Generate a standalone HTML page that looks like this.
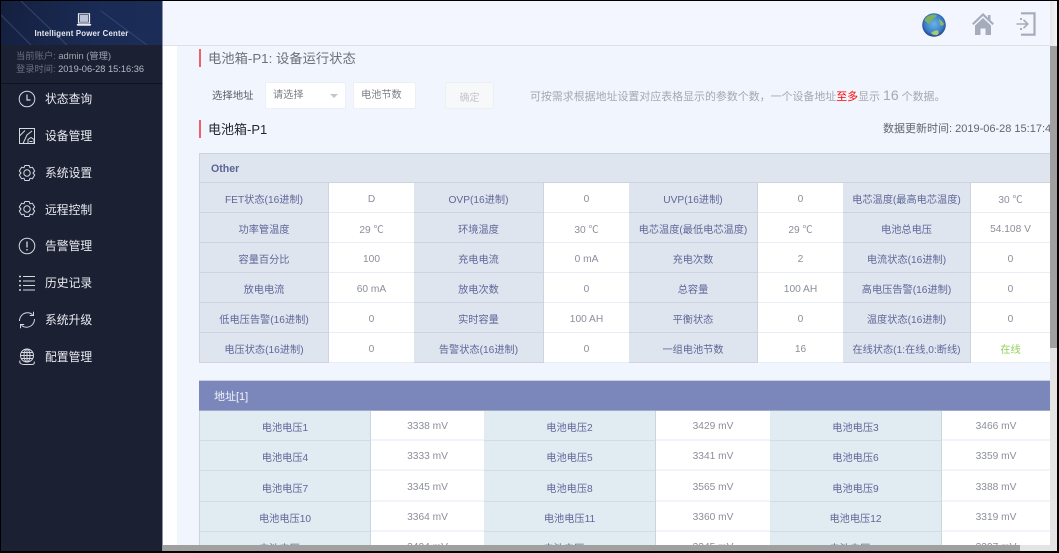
<!DOCTYPE html>
<html lang="zh"><head><meta charset="utf-8"><title>电池箱-P1</title>
<style>
*{box-sizing:border-box}
html,body{margin:0;padding:0;width:1059px;height:553px;overflow:hidden;background:#000}
body{position:relative;font-family:"Liberation Sans","Noto Sans CJK SC",sans-serif;font-size:10.2px}
.a{position:absolute;white-space:nowrap}
#side{left:1px;top:1px;width:161px;height:550px;background:#1c2033}
#brand{left:1px;top:1px;width:161px;height:44px;background:linear-gradient(100deg,#15203f,#1a2b55 60%,#1b2c58);overflow:hidden}
#edge{left:162px;top:1px;width:1px;height:550px;background:#8d93a3}
#head{left:163px;top:1px;width:887px;height:45px;background:#f3f6fe;border-bottom:1px solid #dde1ea}
#left{left:163px;top:46px;width:14px;height:499px;background:#fff}
#main{left:177px;top:46px;width:873px;height:499px;background:#f1f5fd}
.m{left:45px;color:#e9ebf0;font-size:11.8px;line-height:16px}
.ic{left:18px;width:18px;height:18px}
.red{left:199px;width:2px;height:18px;background:#f0606c}
.box{background:#fff;border:1px solid #eceff5;border-radius:2px;top:82px;height:27px;line-height:25px;color:#7c7f88;font-size:10.2px}
table{border-collapse:separate;border-spacing:0;table-layout:fixed;position:absolute;left:0;top:0}
td{padding:3px 0 0;text-align:center;white-space:nowrap;overflow:hidden;font-size:10.2px}
td.l,td.c{padding-top:1px}
#t1wrap{left:199px;top:153px;width:851px;height:211px;overflow:hidden}
#t1 td{height:30px;background:#fff;color:#8b8f9a;border-bottom:1px solid #e9edf5}
#t1 td.l{background:#dfe5ef;color:#5f6798;border-right:1px solid #cdd3e0;border-bottom:1px solid #cdd3e0;padding-top:2px}
#t1 td.l.f{border-left:1px solid #cdd3e0}
#t1 td.h{background:#dfe5ef;color:#5a6397;font-weight:bold;font-size:10.6px;text-align:left;padding-left:11px;padding-top:2px;border:1px solid #cdd3e0;border-right:0}
#t2wrap{left:199px;top:380px;width:851px;height:165px;overflow:hidden}
#t2 td{background:#fff;color:#8b8f9a;border-bottom:2px solid #f1f5fb}
#t2 td.l{background:#e1ebf2;color:#5f6798;border-right:1px solid #cbd5e0;border-bottom:1px solid #d3dce6;padding-top:2px}
#t2 td.l.f{border-left:1px solid #cbd5e0}
#t2 td.h{background:#7b87ba;color:#f2f4fa;text-align:left;padding-left:15px;padding-top:0;font-size:11px;border:0;border-top:1px solid #c9cfe0;border-bottom:1px solid #9fabc9}
</style></head><body>
<div class="a" id="side"></div>
<div class="a" id="brand">
<svg width="161" height="44" style="position:absolute;left:0;top:0"><g stroke="#3a4c78" stroke-width="1" fill="none" opacity=".8"><path d="M20 0L66 44"/><path d="M100 10L146 44"/><path d="M0 14L30 44"/></g></svg>
<svg width="16" height="14" viewBox="0 0 16 14" style="position:absolute;left:75px;top:12px"><path d="M2.5 .8H13.5V10H2.5Z" fill="#0f1a35" stroke="#e8ebf2" stroke-width="1.2"/><path d="M3.7 2H12.3V8.9H3.7Z" fill="#b9c2d6"/><path d="M.6 11H15.4L14.6 12.8H1.4Z" fill="#e8ebf2"/></svg>
<div class="a" style="left:0;width:161px;text-align:center;top:28px;color:#e6e9f0;font-size:7.8px;font-weight:bold;line-height:10px;letter-spacing:.2px">Intelligent Power Center</div>
</div>
<div class="a" style="left:1px;top:83px;width:161px;height:1px;background:#0e1120"></div>
<div class="a" style="left:16px;top:50px;font-size:9.3px;line-height:12px;color:#6b7080">当前账户: <span style="color:#a2a6b2">admin (管理)</span></div>
<div class="a" style="left:16px;top:63px;font-size:9.25px;line-height:12px;color:#6b7080">登录时间: <span style="color:#b6bac4">2019-06-28 15:16:36</span></div>

<svg class="a ic" style="top:90px" viewBox="0 0 18 18" fill="none" stroke="#d5d8e0" stroke-width="1"><circle cx="9" cy="9" r="7.8"/><path d="M9 4.5V10H12.5" stroke-width="1.2"/></svg>
<div class="a m" style="top:91px">状态查询</div>
<svg class="a ic" style="top:127px" viewBox="0 0 18 18" fill="none" stroke="#d5d8e0" stroke-width="1"><rect x="1.5" y="1.5" width="15" height="15"/><path d="M1.5 9L7 3.5M5 16.5L9 8L14 4M10 16.5V12.5L13 10.5L16 12.5V16.5M11.5 14.5H14.5"/></svg>
<div class="a m" style="top:128px">设备管理</div>
<svg class="a ic" style="top:164px" viewBox="0 0 18 18" fill="none" stroke="#d5d8e0" stroke-width="1"><path d="M6.8 1.5H11.2L12 3.8L14.4 3.2L16.7 7L15 9L16.7 11L14.4 14.8L12 14.2L11.2 16.5H6.8L6 14.2L3.6 14.8L1.3 11L3 9L1.3 7L3.6 3.2L6 3.8Z" stroke-linejoin="round"/><circle cx="9" cy="9" r="3.2"/></svg>
<div class="a m" style="top:165px">系统设置</div>
<svg class="a ic" style="top:200px" viewBox="0 0 18 18" fill="none" stroke="#d5d8e0" stroke-width="1"><path d="M6.8 1.5H11.2L12 3.8L14.4 3.2L16.7 7L15 9L16.7 11L14.4 14.8L12 14.2L11.2 16.5H6.8L6 14.2L3.6 14.8L1.3 11L3 9L1.3 7L3.6 3.2L6 3.8Z" stroke-linejoin="round"/><circle cx="9" cy="9" r="3.2"/></svg>
<div class="a m" style="top:202px">远程控制</div>
<svg class="a ic" style="top:237px" viewBox="0 0 18 18" fill="none" stroke="#d5d8e0" stroke-width="1"><circle cx="9" cy="9" r="7.8"/><path d="M9 4.5V10.5M9 12V13.5" stroke-width="1.3"/></svg>
<div class="a m" style="top:238px">告警管理</div>
<svg class="a ic" style="top:274px" viewBox="0 0 18 18" fill="none" stroke="#d5d8e0" stroke-width="1"><path d="M5 2.5H17M5 7H17M5 11.500H17M5 16H17"/><path d="M1 2.500H3M1 7H3M1 11.500H3M1 16H3" stroke-width="1.500"/></svg>
<div class="a m" style="top:275px">历史记录</div>
<svg class="a ic" style="top:311px" viewBox="0 0 18 18" fill="none" stroke="#d5d8e0" stroke-width="1"><path d="M1.500 10C1.500 5.500 5 1.800 9.500 1.800C11.500 1.800 13.300 2.500 14.500 3.800"/><path d="M16.500 8C16.500 12.500 13 16.200 8.500 16.200C6.500 16.200 4.700 15.500 3.500 14.200"/><path d="M15.500 .8V4.500H11.800M2.500 17.200V13.500H6.200"/></svg>
<div class="a m" style="top:312px">系统升级</div>
<svg class="a ic" style="top:348px" viewBox="0 0 18 18" fill="none" stroke="#d5d8e0" stroke-width="1"><circle cx="9" cy="7.500" r="6.500"/><ellipse cx="9" cy="7.500" rx="3" ry="6.500"/><path d="M2.500 7.500H15.500M9 1V14M3.500 4.500H14.500M3.500 10.500H14.500"/><path d="M2 12.500C1 15 3 16.500 6 16.500H14C16 16.500 17 15 16 13.500"/></svg>
<div class="a m" style="top:349px">配置管理</div>

<div class="a" id="edge"></div>
<div class="a" id="head"></div>
<div class="a" id="left"></div>
<div class="a" id="main"></div>

<svg class="a" style="left:922px;top:13px" width="24" height="24" viewBox="0 0 24 24"><defs><radialGradient id="g" cx=".5" cy=".45" r=".6"><stop offset="0" stop-color="#68b4ea"/><stop offset=".65" stop-color="#3a7fc4"/><stop offset="1" stop-color="#1f2c80"/></radialGradient></defs><circle cx="12" cy="12" r="11.800" fill="url(#g)"/><path d="M6 3C9 1.500 13 1 15 2.500C14 4.500 12 4.500 11 6C10 8 8 8.500 7.500 11C5 10 3 8 2.500 7C3 5.500 4.500 4 6 3Z" fill="#7fb060"/><path d="M17 6.500C19 7 21 9 22 11C21 13 19 13 18 12C18.500 10.500 17 9 17 6.500Z" fill="#8db96a"/><path d="M9 20C11 18 14 17 16 17.500C17 19 17 20.500 15.500 22C13 22.500 10.500 22 9 20Z" fill="#a8c878"/></svg>
<svg class="a" style="left:971px;top:12px" width="24" height="24" viewBox="0 0 24 24"><path d="M12 1L1 11.500L2.500 13L12 4L21.500 13L23 11.500L19.500 8.200V3H17V5.800Z" fill="#a7acba"/><path d="M4 13.500L12 6L20 13.500V23H14.500V16.500H9.500V23H4Z" fill="#a7acba"/></svg>
<svg class="a" style="left:1016px;top:12px" width="20" height="24" viewBox="0 0 20 24" fill="none" stroke="#a7acba"><path d="M5 1.300H18.500V22.700H5" stroke-width="2.200"/><path d="M5 6V8M5 16V18" stroke-width="2"/><path d="M.5 12H11M7.500 7.800L11.800 12L7.500 16.200" stroke-width="1.600"/></svg>

<div class="a red" style="top:49px"></div>
<div class="a" style="left:208px;top:50px;font-size:13.3px;line-height:18px;color:#6d7078">电池箱-P1: 设备运行状态</div>
<div class="a" style="left:212px;top:89px;font-size:10.400px;line-height:15px;color:#5e6068">选择地址</div>
<div class="a box" style="left:265px;width:81px;padding-left:7px">请选择</div>
<div class="a" style="left:330px;top:94px;width:0;height:0;border-left:4px solid transparent;border-right:4px solid transparent;border-top:4px solid #c4c6cc"></div>
<div class="a box" style="left:353px;width:63px;padding-left:7px">电池节数</div>
<div class="a box" style="left:445px;width:49px;text-align:center;background:#f7f8fa;color:#c4c6cc;font-size:10px;padding-top:3px">确定</div>
<div class="a" style="left:530px;top:86px;font-size:10.950px;line-height:18px;color:#a6a8ae">可按需求根据地址设置对应表格显示的参数个数，一个设备地址<span style="color:#f00">至多</span>显示 <span style="font-size:14px">16</span> 个数据。</div>
<div class="a red" style="top:120px"></div>
<div class="a" style="left:208px;top:121px;font-size:13px;line-height:18px;color:#26282e">电池箱-P1</div>
<div class="a" style="left:883px;top:122px;font-size:11px;line-height:15px;color:#63666c;width:167px;overflow:hidden">数据更新时间: 2019-06-28 15:17:46</div>

<div class="a" id="t1wrap"><table id="t1" style="width:851px">
<colgroup><col style="width:130px"><col style="width:85px"><col style="width:130px"><col style="width:85px"><col style="width:129px"><col style="width:85px"><col style="width:128px"><col style="width:79px"></colgroup>
<tr><td class="h" colspan="8">Other</td></tr>
<tr><td class="l f">FET状态(16进制)</td><td>D</td><td class="l">OVP(16进制)</td><td>0</td><td class="l">UVP(16进制)</td><td>0</td><td class="l">电芯温度(最高电芯温度)</td><td class="c">30 ℃</td></tr>
<tr><td class="l f">功率管温度</td><td class="c">29 ℃</td><td class="l">环境温度</td><td class="c">30 ℃</td><td class="l">电芯温度(最低电芯温度)</td><td class="c">29 ℃</td><td class="l">电池总电压</td><td>54.108 V</td></tr>
<tr><td class="l f">容量百分比</td><td>100</td><td class="l">充电电流</td><td>0 mA</td><td class="l">充电次数</td><td>2</td><td class="l">电流状态(16进制)</td><td>0</td></tr>
<tr><td class="l f">放电电流</td><td>60 mA</td><td class="l">放电次数</td><td>0</td><td class="l">总容量</td><td>100 AH</td><td class="l">高电压告警(16进制)</td><td>0</td></tr>
<tr><td class="l f">低电压告警(16进制)</td><td>0</td><td class="l">实时容量</td><td>100 AH</td><td class="l">平衡状态</td><td>0</td><td class="l">温度状态(16进制)</td><td>0</td></tr>
<tr><td class="l f">电压状态(16进制)</td><td>0</td><td class="l">告警状态(16进制)</td><td>0</td><td class="l">一组电池节数</td><td>16</td><td class="l">在线状态(1:在线,0:断线)</td><td class="c" style="color:#8fd05a">在线</td></tr>
</table></div>

<div class="a" id="t2wrap"><table id="t2" style="width:851px">
<colgroup><col style="width:172px"><col style="width:113px"><col style="width:172px"><col style="width:114px"><col style="width:172px"><col style="width:108px"></colgroup>
<tr style="height:31px"><td class="h" colspan="6">地址[1]</td></tr>
<tr style="height:30px"><td class="l f">电池电压1</td><td>3338 mV</td><td class="l">电池电压2</td><td>3429 mV</td><td class="l">电池电压3</td><td>3466 mV</td></tr>
<tr style="height:30px"><td class="l f">电池电压4</td><td>3333 mV</td><td class="l">电池电压5</td><td>3341 mV</td><td class="l">电池电压6</td><td>3359 mV</td></tr>
<tr style="height:31px"><td class="l f">电池电压7</td><td>3345 mV</td><td class="l">电池电压8</td><td>3565 mV</td><td class="l">电池电压9</td><td>3388 mV</td></tr>
<tr style="height:30px"><td class="l f">电池电压10</td><td>3364 mV</td><td class="l">电池电压11</td><td>3360 mV</td><td class="l">电池电压12</td><td>3319 mV</td></tr>
<tr style="height:30px"><td class="l f">电池电压13</td><td>3404 mV</td><td class="l">电池电压14</td><td>3345 mV</td><td class="l">电池电压15</td><td>3397 mV</td></tr>
</table></div>

<div class="a" style="left:1050px;top:1px;width:7px;height:45px;background:linear-gradient(90deg,#e4e6ea,#f2f4f8)"></div>
<div class="a" style="left:1050px;top:46px;width:7px;height:505px;background:#e4e4e4"></div>
<div class="a" style="left:1050px;top:46px;width:7px;height:302px;background:#a0a0a0"></div>
<div class="a" style="left:163px;top:545px;width:887px;height:6px;background:#e4e4e4"></div>
<div class="a" style="left:163px;top:545px;width:857px;height:6px;background:#a0a0a0"></div>
</body></html>
